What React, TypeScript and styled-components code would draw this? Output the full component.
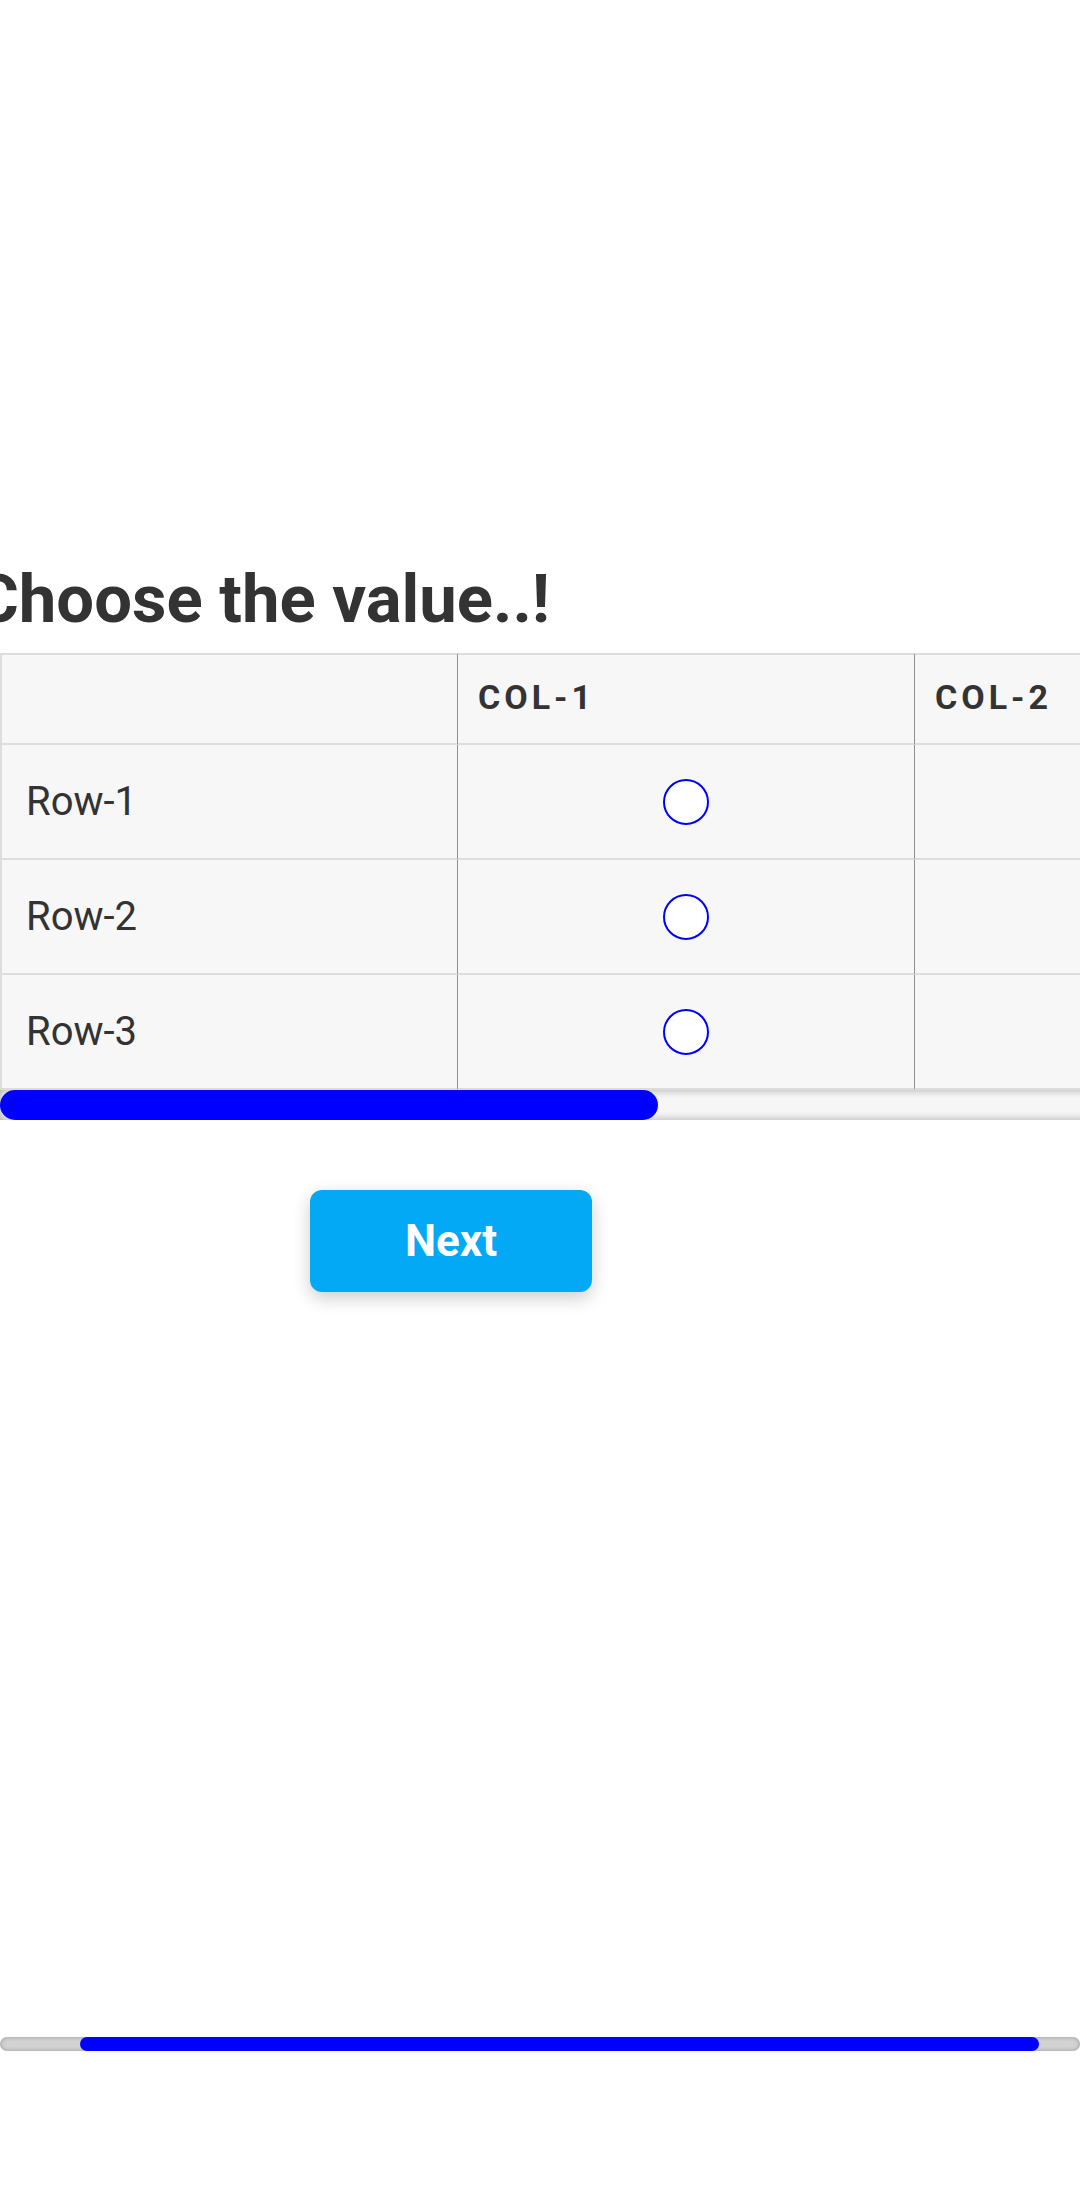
import React from 'react';
import styled, { createGlobalStyle } from 'styled-components';

const GlobalStyle = createGlobalStyle`
  html, body {
    margin: 0;
    padding: 0;
    background: #ffffff;
    font-family: Roboto, 'Noto Sans', sans-serif;
  }
`;

// the screen is shown scrolled sideways a little, so the page clips what is off to the left/right
const Screen = styled.div`
  width: 1080px;
  height: 2051px;
  overflow: hidden;
  display: flex;
  flex-direction: column;
`;

const Page = styled.div`
  flex: 1;
  padding-top: 558px;
  display: flex;
  flex-direction: column;
`;

const Title = styled.h1`
  margin: 0 0 13px -25px;
  font-size: 67px;
  line-height: 82px;
  font-weight: 700;
  color: #333333;
  white-space: nowrap;
`;

const MatrixWrap = styled.div<{ $w: number }>`
  width: ${p => p.$w}px;
  flex-shrink: 0;
  overflow: hidden;
`;

const Table = styled.table<{ $w: number }>`
  width: ${p => p.$w}px;
  table-layout: fixed;
  border-collapse: separate;
  border-spacing: 0;
  background: #f7f7f7;
  color: #333333;
`;

const Col = styled.col<{ $w?: number }>`
  width: ${p => (p.$w ? `${p.$w}px` : 'auto')};
`;

const HeadCell = styled.th`
  box-sizing: border-box;
  height: 92px;
  padding: 0 0 4px 20px;
  text-align: left;
  font-size: 34px;
  font-weight: 700;
  letter-spacing: 4px;
  text-transform: uppercase;
  border-top: 2px solid #dddddd;
  border-bottom: 2px solid #dddddd;
  border-left: 1px solid #8f8f8f;

  &:first-child {
    border-left: 2px solid #dddddd;
  }
`;

const LabelCell = styled.td`
  box-sizing: border-box;
  height: 115px;
  padding: 0 0 0 24px;
  font-size: 40px;
  font-weight: 400;
  border-bottom: 2px solid #dddddd;
  border-left: 2px solid #dddddd;
`;

const ChoiceCell = styled.td`
  box-sizing: border-box;
  height: 115px;
  padding: 0;
  text-align: center;
  vertical-align: middle;
  border-bottom: 2px solid #dddddd;
  border-left: 1px solid #8f8f8f;
`;

const Radio = styled.input`
  appearance: none;
  -webkit-appearance: none;
  display: inline-block;
  vertical-align: middle;
  margin: 0;
  width: 46px;
  height: 46px;
  border: 2px solid #0000ff;
  border-radius: 50%;
  background: #ffffff;
  box-sizing: border-box;
  cursor: pointer;

  &:checked {
    background: radial-gradient(circle, #0000ff 0 9px, #ffffff 10px);
  }
`;

// scroll bars drawn as parts of the page
const Track = styled.div<{ $w: number; $h: number; $variant: 'light' | 'grey' }>`
  width: ${p => p.$w}px;
  height: ${p => p.$h}px;
  flex-shrink: 0;
  display: flex;
  border-radius: ${p => (p.$variant === 'grey' ? `${p.$h / 2}px` : '0')};
  background: ${p => (p.$variant === 'grey' ? '#d2d2d2' : '#f6f6f6')};
  box-shadow: ${p =>
    p.$variant === 'grey' ? 'inset 0 0 4px rgba(0, 0, 0, 0.28)' : 'inset 0 0 8px rgba(0, 0, 0, 0.32)'};
`;

const Thumb = styled.div<{ $h: number }>`
  height: 100%;
  flex-shrink: 0;
  background: #0000ff;
  border-radius: ${p => p.$h / 2}px;
`;

const NextButton = styled.button`
  align-self: flex-start;
  margin: 70px 0 0 310px;
  width: 282px;
  height: 102px;
  border: none;
  border-radius: 12px;
  background: #03a9f4;
  color: #ffffff;
  font-family: Roboto, 'Noto Sans', sans-serif;
  font-size: 44px;
  font-weight: 700;
  box-shadow: 0 6px 18px rgba(0, 0, 0, 0.2);
  cursor: pointer;
`;

const PageBar = styled.div`
  margin-top: auto;
`;

const columns = ['Col-1', 'Col-2', 'Col-3'];
const rows = ['Row-1', 'Row-2', 'Row-3'];

const VIEW_W = 1080;
const PAGE_W = 1216;
const PAGE_SCROLL = 90;
const MATRIX_VIEW = 1126;
const MATRIX_W = 1927;

const ScrollBar: React.FC<{ track: number; view: number; content: number; offset: number; height: number; variant: 'light' | 'grey' }> = ({
  track,
  view,
  content,
  offset,
  height,
  variant,
}) => {
  const size = (track * view) / content;
  const left = (track * offset) / content;
  return (
    <Track $w={track} $h={height} $variant={variant}>
      <Thumb $h={height} style={{ width: size, marginLeft: left }} />
    </Track>
  );
};

const App: React.FC = () => {
  return (
    <>
      <GlobalStyle />
      <Screen>
        <Page>
          <Title>Choose the value..!</Title>
          <MatrixWrap $w={MATRIX_VIEW}>
            <Table $w={MATRIX_W}>
              <colgroup>
                <Col $w={457} />
                <Col $w={457} />
                <Col $w={457} />
                <Col />
              </colgroup>
              <thead>
                <tr>
                  <HeadCell />
                  {columns.map(c => (
                    <HeadCell key={c}>{c}</HeadCell>
                  ))}
                </tr>
              </thead>
              <tbody>
                {rows.map(r => (
                  <tr key={r}>
                    <LabelCell>{r}</LabelCell>
                    {columns.map(c => (
                      <ChoiceCell key={c}>
                        <Radio type="radio" name={r} value={c} aria-label={`${r} ${c}`} />
                      </ChoiceCell>
                    ))}
                  </tr>
                ))}
              </tbody>
            </Table>
          </MatrixWrap>
          <ScrollBar track={MATRIX_VIEW} view={MATRIX_VIEW} content={MATRIX_W} offset={0} height={30} variant="light" />
          <NextButton type="button">Next</NextButton>
          <PageBar>
            <ScrollBar track={VIEW_W} view={VIEW_W} content={PAGE_W} offset={PAGE_SCROLL} height={14} variant="grey" />
          </PageBar>
        </Page>
      </Screen>
    </>
  );
};

export default App;
